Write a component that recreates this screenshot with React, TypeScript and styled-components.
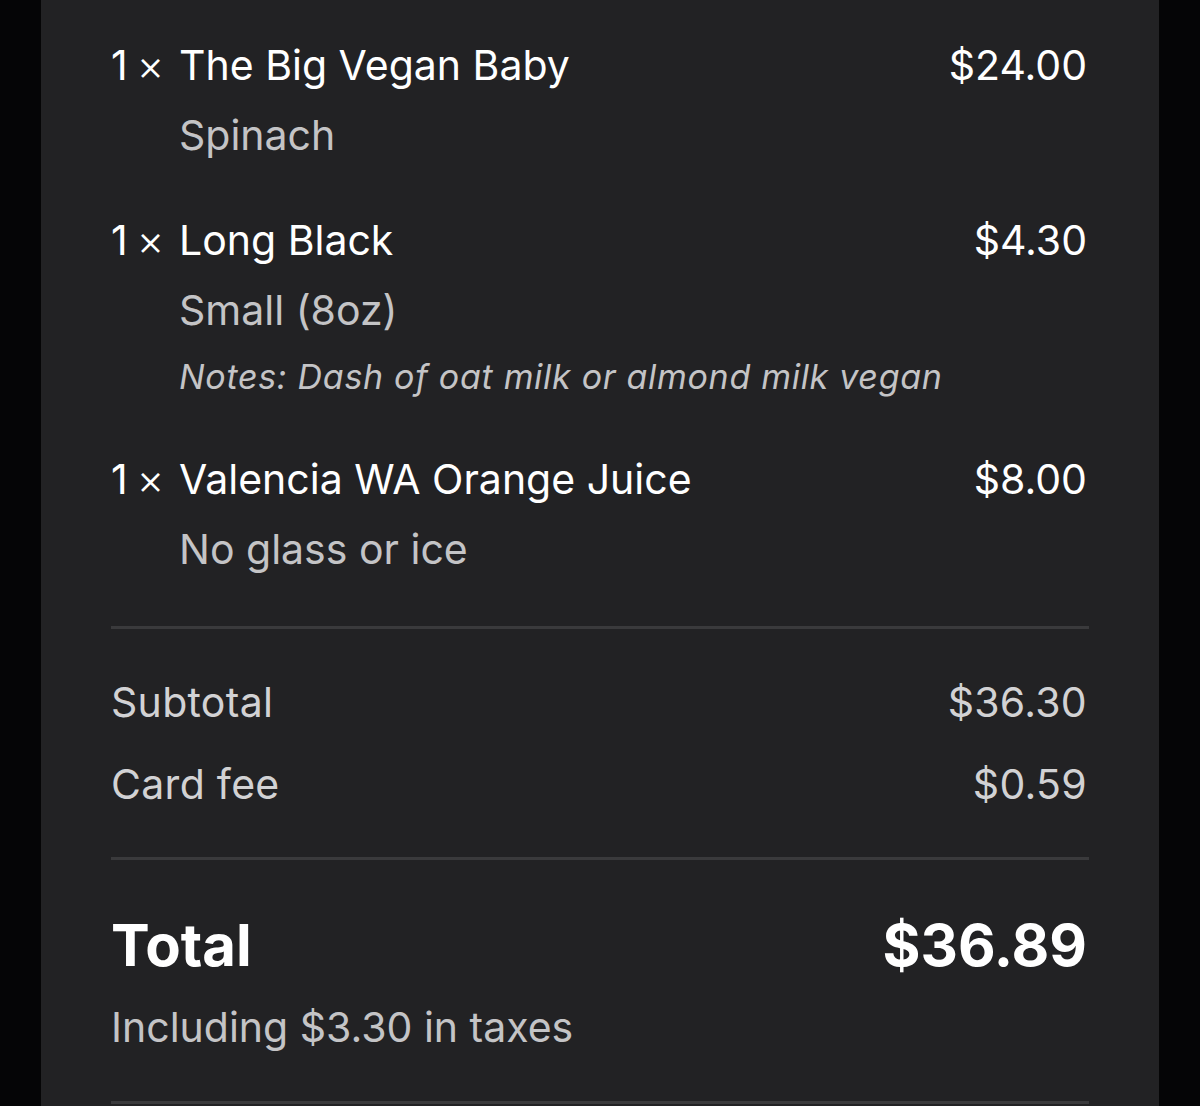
import React from "react";
import styled, { createGlobalStyle } from "styled-components";

const Global = createGlobalStyle`
  html, body { margin: 0; padding: 0; background: #050506; }
  body { font-family: Inter, "Noto Sans", sans-serif; -webkit-font-smoothing: antialiased; }
`;

const Page = styled.div`
  width: 1200px;
  height: 1106px;
  background: #050506;
  display: flex;
  justify-content: center;
  overflow: hidden;
`;

const Card = styled.div`
  width: 1118px;
  box-sizing: border-box;
  background: #222224;
  padding: 30px 72px 0 70px;
  display: flex;
  flex-direction: column;
`;

const Items = styled.div`
  display: flex;
  flex-direction: column;
  gap: 35px;
`;

const Item = styled.div`
  display: grid;
  grid-template-columns: 68px 1fr auto;
`;

const Qty = styled.div`
  color: #ffffff;
  font-size: 41px;
  line-height: 70px;
  display: flex;
  gap: 9px;
`;

const Times = styled.span`
  font-size: 42px;
  font-weight: 300;
`;

const ItemBody = styled.div`
  display: flex;
  flex-direction: column;
`;

const ItemName = styled.div`
  color: #ffffff;
  font-size: 41px;
  line-height: 70px;
`;

const Option = styled.div`
  color: #c4c4c6;
  font-size: 41px;
  line-height: 70px;
`;

const Note = styled.div`
  color: #c4c4c6;
  font-size: 34px;
  font-style: italic;
  line-height: 64px;
  letter-spacing: 0.7px;
`;

const Price = styled.div`
  color: #ffffff;
  font-size: 41px;
  line-height: 70px;
`;

const Divider = styled.div<{ $top: number }>`
  height: 3px;
  background: #3a3a3c;
  margin-top: ${(p) => p.$top}px;
  margin-right: -2px;
`;

const Summary = styled.div`
  display: flex;
  flex-direction: column;
  padding-top: 32px;
`;

const Row = styled.div`
  display: flex;
  justify-content: space-between;
  color: #d2d2d4;
  font-size: 41px;
  line-height: 82px;
  letter-spacing: 0.3px;
`;

const TotalRow = styled.div`
  display: flex;
  justify-content: space-between;
  color: #ffffff;
  font-size: 58px;
  font-weight: 700;
  line-height: 80px;
  margin-top: 45px;
`;

const TaxNote = styled.div`
  color: #c4c4c6;
  font-size: 41px;
  line-height: 70px;
  margin-top: 7px;
`;

type Line = { qty: number; name: string; price: string; options: string[]; note?: string };

const lines: Line[] = [
  { qty: 1, name: "The Big Vegan Baby", price: "$24.00", options: ["Spinach"] },
  { qty: 1, name: "Long Black", price: "$4.30", options: ["Small (8oz)"], note: "Notes: Dash of oat milk or almond milk vegan" },
  { qty: 1, name: "Valencia WA Orange Juice", price: "$8.00", options: ["No glass or ice"] },
];

export default function App() {
  return (
    <>
      <Global />
      <Page>
        <Card>
          <Items>
            {lines.map((l) => (
              <Item key={l.name}>
                <Qty>
                  <span>{l.qty}</span>
                  <Times>×</Times>
                </Qty>
                <ItemBody>
                  <ItemName>{l.name}</ItemName>
                  {l.options.map((o) => (
                    <Option key={o}>{o}</Option>
                  ))}
                  {l.note && <Note>{l.note}</Note>}
                </ItemBody>
                <Price>{l.price}</Price>
              </Item>
            ))}
          </Items>
          <Divider $top={42} />
          <Summary>
            <Row>
              <span>Subtotal</span>
              <span>$36.30</span>
            </Row>
            <Row>
              <span>Card fee</span>
              <span>$0.59</span>
            </Row>
          </Summary>
          <Divider $top={32} />
          <TotalRow>
            <span>Total</span>
            <span>$36.89</span>
          </TotalRow>
          <TaxNote>Including $3.30 in taxes</TaxNote>
          <Divider $top={39} />
        </Card>
      </Page>
    </>
  );
}
